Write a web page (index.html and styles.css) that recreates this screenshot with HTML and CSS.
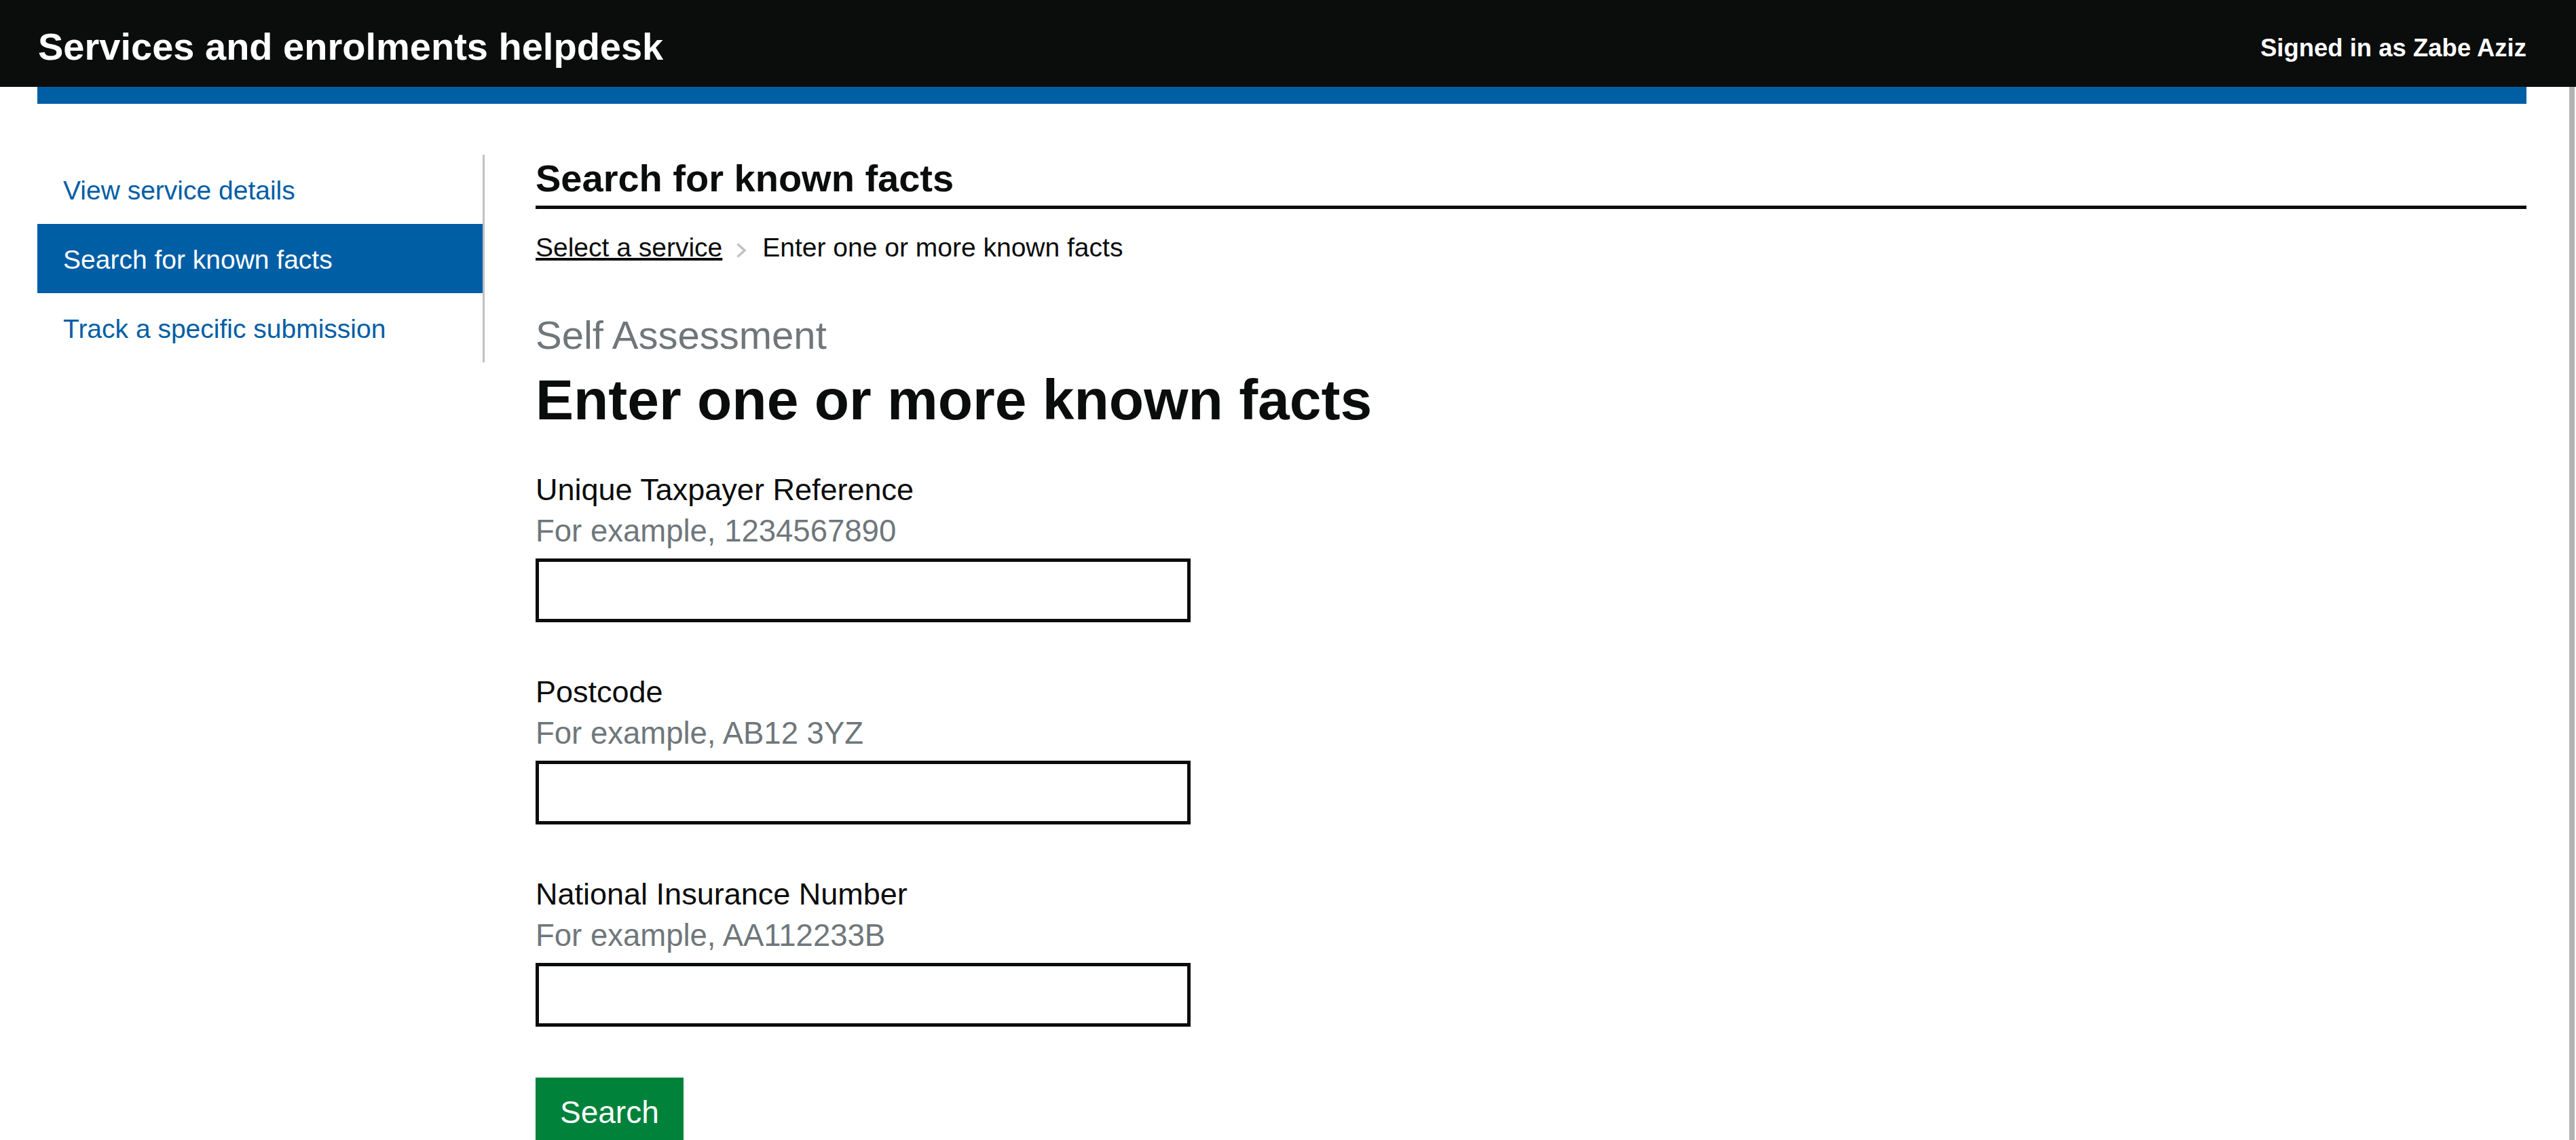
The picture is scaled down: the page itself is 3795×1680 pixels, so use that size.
FILE: index.html
```html
<!DOCTYPE html>
<html lang="en">
<head>
<meta charset="utf-8">
<title>Search for known facts - Services and enrolments helpdesk</title>
<link rel="stylesheet" href="styles.css">
</head>
<body>
<header class="site-header">
  <div class="site-header__title">Services and enrolments helpdesk</div>
  <div class="site-header__user">Signed in as Zabe Aziz</div>
</header>
<div class="page">
  <div class="phase-bar"></div>
  <div class="layout">
    <nav class="side-nav">
      <a class="side-nav__link" href="#">View service details</a>
      <a class="side-nav__link side-nav__link--active" href="#">Search for known facts</a>
      <a class="side-nav__link" href="#">Track a specific submission</a>
    </nav>
    <main class="content">
      <h2 class="page-heading">Search for known facts</h2>
      <div class="breadcrumbs">
        <a class="breadcrumbs__link" href="#">Select a service</a><svg class="breadcrumbs__chevron" width="16" height="22" viewBox="0 0 16 22"><path d="M2.5 1.5 L13 11 L2.5 20.5" fill="none" stroke="#bfc1c3" stroke-width="3.5"/></svg><span class="breadcrumbs__current">Enter one or more known facts</span>
      </div>
      <span class="caption">Self Assessment</span>
      <h1 class="heading-xl">Enter one or more known facts</h1>
      <form class="facts-form">
        <div class="form-group">
          <label class="form-label" for="utr">Unique Taxpayer Reference</label>
          <div class="form-hint">For example, 1234567890</div>
          <input class="form-input" id="utr" type="text">
        </div>
        <div class="form-group">
          <label class="form-label" for="postcode">Postcode</label>
          <div class="form-hint">For example, AB12 3YZ</div>
          <input class="form-input" id="postcode" type="text">
        </div>
        <div class="form-group">
          <label class="form-label" for="nino">National Insurance Number</label>
          <div class="form-hint">For example, AA112233B</div>
          <input class="form-input" id="nino" type="text">
        </div>
        <button class="button" type="submit">Search</button>
      </form>
    </main>
  </div>
</div>
<div class="scroll-thumb"></div>
</body>
</html>
```

FILE: styles.css
```css
html {
  overflow: hidden;
}

body {
  margin: 0;
  font-family: "Liberation Sans", Arial, sans-serif;
  color: #0b0c0c;
  background: #ffffff;
}

.site-header {
  background: #0b0c0c;
  color: #ffffff;
  height: 128px;
  box-sizing: border-box;
  padding: 37px 73px 0 56px;
  display: flex;
  justify-content: space-between;
  align-items: flex-start;
}

.site-header__title {
  font-size: 56px;
  line-height: 64px;
  font-weight: 700;
}

.site-header__user {
  font-size: 36.5px;
  line-height: 44px;
  font-weight: 700;
  margin-top: 12px;
}

.page {
  margin: 0 73px 0 55px;
}

.phase-bar {
  height: 25px;
  background: #005ea5;
}

.layout {
  display: flex;
  padding-top: 75px;
}

.side-nav {
  width: 656px;
  flex: none;
  align-self: flex-start;
  border-right: 3px solid #bfc1c3;
}

.side-nav__link {
  display: block;
  padding: 4px 0 0 38px;
  line-height: 98px;
  font-size: 39px;
  color: #005ea5;
  text-decoration: none;
}

.side-nav__link--active {
  background: #005ea5;
  color: #ffffff;
}

.content {
  flex: 1;
  margin-left: 75px;
  min-width: 0;
}

.page-heading {
  margin: 3px 0 0;
  font-size: 56px;
  line-height: 64px;
  font-weight: 700;
  padding-bottom: 8px;
  border-bottom: 5px solid #0b0c0c;
}

.breadcrumbs {
  margin-top: 33px;
  font-size: 39px;
  line-height: 48px;
  white-space: nowrap;
}

.breadcrumbs__link {
  color: #0b0c0c;
  text-decoration: underline;
  text-decoration-thickness: 4px;
  text-underline-offset: 2px;
}

.breadcrumbs__chevron {
  margin: 0 23px 0 20px;
  vertical-align: -2px;
}

.breadcrumbs__current {
  color: #0b0c0c;
}

.caption {
  display: block;
  margin-top: 71px;
  font-size: 58px;
  line-height: 68px;
  color: #6f777b;
}

.heading-xl {
  margin: 14.5px 0 0;
  font-size: 84px;
  line-height: 92px;
  font-weight: 700;
}

.facts-form {
  margin-top: 59.4px;
}

.form-group {
  margin-bottom: 75.4px;
}

.form-label {
  display: block;
  font-size: 45px;
  line-height: 56px;
}

.form-hint {
  margin-top: 5.3px;
  font-size: 45.5px;
  line-height: 56px;
  color: #6f777b;
}

.form-input {
  display: block;
  margin-top: 12px;
  width: 965px;
  height: 93.4px;
  box-sizing: border-box;
  border: 5px solid #0b0c0c;
  border-radius: 0;
  padding: 0 12px;
  font-family: inherit;
  font-size: 46px;
  background: #ffffff;
  outline: none;
}

.button {
  display: inline-block;
  background: #00823b;
  color: #ffffff;
  border: 0;
  border-radius: 0;
  font-family: inherit;
  font-size: 46px;
  line-height: 56px;
  padding: 23px 36px 13px;
  box-shadow: 0 5px 0 #003618;
  cursor: pointer;
}

.scroll-thumb {
  position: fixed;
  top: 128px;
  bottom: 0;
  right: 2px;
  width: 8px;
  background: #b3b3b3;
}
```
